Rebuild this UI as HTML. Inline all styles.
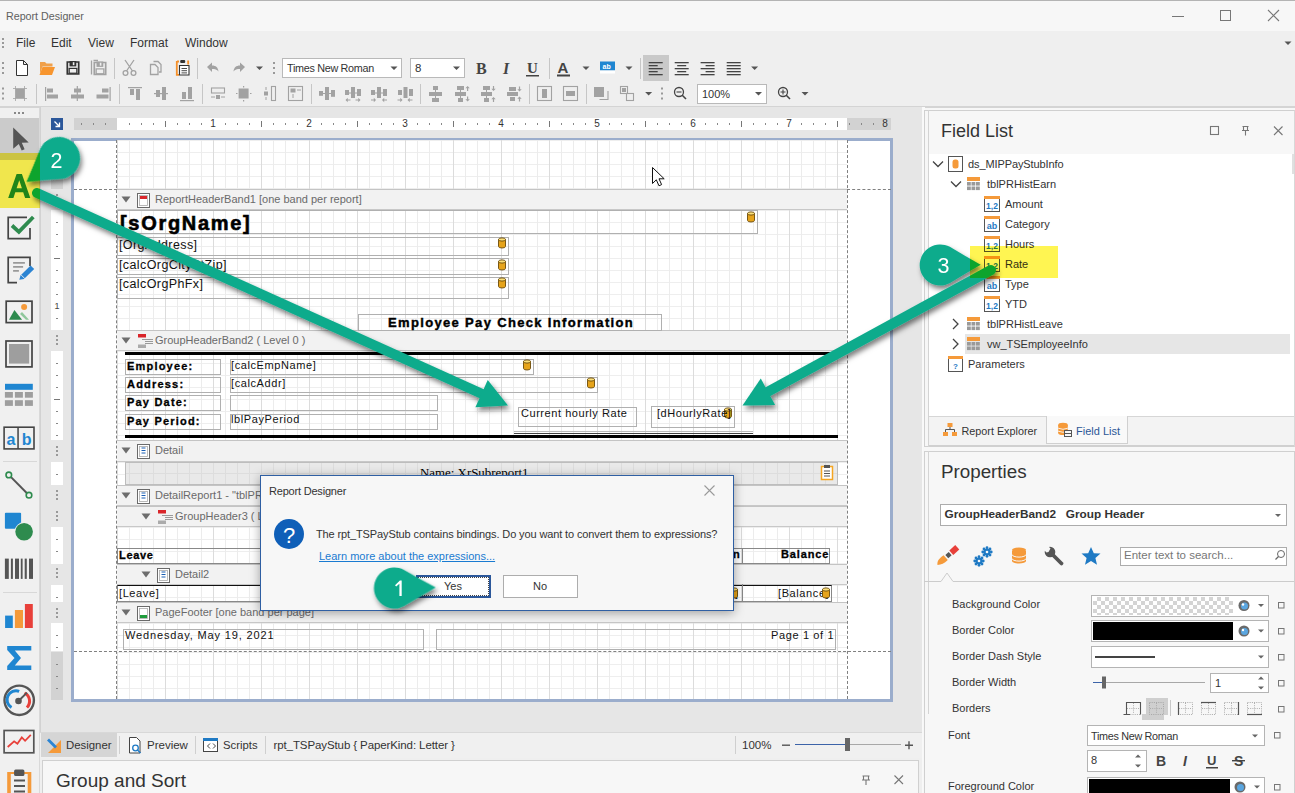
<!DOCTYPE html>
<html><head><meta charset="utf-8">
<style>
*{box-sizing:border-box;margin:0;padding:0}
html,body{width:1295px;height:793px;overflow:hidden;background:#efefef;font-family:"Liberation Sans",sans-serif;color:#222}
.a{position:absolute}
.t{position:absolute;white-space:pre;line-height:1}
svg{position:absolute;overflow:visible}
</style></head><body>
<div class="a" style="left:0;top:0;width:1295px;height:31px;background:#f7f7f7;border-top:1px solid #b4b4b4"></div>
<div class="t" style="left:6px;top:11px;font-size:10.7px;color:#606060">Report Designer</div>
<svg style="left:0;top:0" width="1295" height="31">
 <line x1="1172" y1="16.5" x2="1184" y2="16.5" stroke="#777" stroke-width="1"/>
 <rect x="1220.5" y="10.5" width="10" height="10" fill="none" stroke="#777"/>
 <path d="M1268 10 L1279 21 M1279 10 L1268 21" stroke="#777" stroke-width="1.1"/>
</svg>
<div class="t" style="left:16px;top:37px;font-size:12px;color:#333">File</div>
<div class="t" style="left:51px;top:37px;font-size:12px;color:#333">Edit</div>
<div class="t" style="left:88px;top:37px;font-size:12px;color:#333">View</div>
<div class="t" style="left:130px;top:37px;font-size:12px;color:#333">Format</div>
<div class="t" style="left:185px;top:37px;font-size:12px;color:#333">Window</div>
<svg style="left:0;top:0" width="20" height="60"><rect x="2" y="38" width="2" height="2" fill="#999"/><rect x="2" y="42" width="2" height="2" fill="#999"/><rect x="2" y="46" width="2" height="2" fill="#999"/></svg>
<svg style="left:0;top:0" width="1295" height="107"><rect x="2" y="62" width="2" height="2" fill="#999"/><rect x="2" y="67" width="2" height="2" fill="#999"/><rect x="2" y="72" width="2" height="2" fill="#999"/><path d="M16.5 60.5 h7 l4 4 v11 h-11z M23.5 60.5 v4 h4" fill="#fff" stroke="#333" stroke-width="1"/><path d="M40 62 h5 l1.5 1.5 h6 v3 h-10 l-2.5 7.5 z" fill="#f0a04a"/><path d="M42.5 67 h12.5 l-3 8 h-12.5z" fill="#f7952e"/><path d="M67.3 62 h11.4 v12 h-11.4z" fill="none" stroke="#333" stroke-width="1.7"/><rect x="69.5" y="61" width="6.8" height="5.4" fill="#333"/><rect x="72.8" y="62.2" width="1.6" height="3" fill="#efefef"/><rect x="68.5" y="67.8" width="9" height="6" fill="#333"/><rect x="69.8" y="69" width="6.4" height="3.6" fill="#efefef"/><g transform="translate(0 0.5)"><path d="M94.3 62 h11.4 v12 h-11.4z" fill="none" stroke="#a2a2a2" stroke-width="1.7"/><rect x="96.5" y="61" width="6.8" height="5.4" fill="#a2a2a2"/><rect x="99.8" y="62.2" width="1.6" height="3" fill="#efefef"/><rect x="95.5" y="67.8" width="9" height="6" fill="#a2a2a2"/><rect x="96.8" y="69" width="6.4" height="3.6" fill="#efefef"/></g><path d="M91.5 60.5 v14 M93.5 60.5 h4.5" stroke="#a2a2a2" stroke-width="1.3"/><rect x="114" y="58" width="1" height="21" fill="#c6c6c6"/><path d="M125 60 l7.5 11 M134 60 l-7.5 11" stroke="#a2a2a2" stroke-width="1.3"/><circle cx="125.5" cy="73" r="2.4" fill="none" stroke="#a2a2a2" stroke-width="1.3"/><circle cx="133.5" cy="73" r="2.4" fill="none" stroke="#a2a2a2" stroke-width="1.3"/><path d="M153.5 61.5 h4.5 l3 3 v7.5 h-2" fill="none" stroke="#a2a2a2" stroke-width="1.3"/><path d="M150.5 64.5 h4.5 l3 3 v7 h-7.5z" fill="#efefef" stroke="#a2a2a2" stroke-width="1.3"/><path d="M177 61.5 h2 M176.8 61 v13.8 h2.2 M187.2 61.5 h1 v3" fill="none" stroke="#f5902a" stroke-width="1.8"/><rect x="180.2" y="60" width="5" height="3" rx="1" fill="#333"/><path d="M179.5 65.5 h9.5 v9.5 h-9.5z" fill="#fff" stroke="#333" stroke-width="1.1"/><path d="M181.5 68.5h5.5 M181.5 70.7h5.5 M181.5 72.9h5.5" stroke="#333" stroke-width="0.9"/><rect x="197" y="58" width="1" height="21" fill="#c6c6c6"/><path d="M207 67 l5 -4.5 v3 c4 0 6 2 6.5 6 c-1.5 -2 -3.5 -2.5 -6.5 -2.5 v3z" fill="#a2a2a2"/><path d="M245 67 l-5 -4.5 v3 c-4 0 -6 2 -6.5 6 c1.5 -2 3.5 -2.5 6.5 -2.5 v3z" fill="#a2a2a2"/><path d="M256.0 66.5 h7 l-3.5 3.5z" fill="#555"/><rect x="273" y="62" width="2" height="2" fill="#999"/><rect x="273" y="67" width="2" height="2" fill="#999"/><rect x="273" y="72" width="2" height="2" fill="#999"/><text x="476" y="74" font-family="Liberation Serif" font-weight="bold" font-size="16" fill="#444">B</text><text x="503" y="74" font-family="Liberation Serif" font-style="italic" font-weight="bold" font-size="16" fill="#444">I</text><text x="527" y="73" font-family="Liberation Serif" font-weight="bold" font-size="15" fill="#444">U</text><rect x="526" y="75" width="13" height="1.5" fill="#444"/><rect x="549" y="58" width="1" height="21" fill="#c6c6c6"/><text x="557.5" y="73" font-family="Liberation Sans" font-weight="bold" font-size="15" fill="#444">A</text><rect x="557" y="74.5" width="13" height="2" fill="#444"/><path d="M582.5 66.5 h7 l-3.5 3.5z" fill="#555"/><rect x="600" y="61.5" width="15" height="9" fill="#1f86d1"/><rect x="600" y="70.5" width="15" height="3" fill="#fff"/><text x="602.5" y="68.5" font-family="Liberation Sans" font-weight="bold" font-size="7" fill="#fff">ab</text><path d="M625.5 66.5 h7 l-3.5 3.5z" fill="#555"/><rect x="640" y="58" width="1" height="21" fill="#c6c6c6"/><rect x="643" y="55" width="26" height="26" fill="#c9c9c9"/><rect x="648.7" y="62" width="14" height="1.3" fill="#444"/><rect x="648.7" y="65" width="9" height="1.3" fill="#444"/><rect x="648.7" y="68" width="14" height="1.3" fill="#444"/><rect x="648.7" y="71" width="9" height="1.3" fill="#444"/><rect x="648.7" y="74" width="14" height="1.3" fill="#444"/><rect x="674.7" y="62" width="14" height="1.3" fill="#444"/><rect x="677.2" y="65" width="9" height="1.3" fill="#444"/><rect x="674.7" y="68" width="14" height="1.3" fill="#444"/><rect x="677.2" y="71" width="9" height="1.3" fill="#444"/><rect x="674.7" y="74" width="14" height="1.3" fill="#444"/><rect x="700.6" y="62" width="14" height="1.3" fill="#444"/><rect x="705.6" y="65" width="9" height="1.3" fill="#444"/><rect x="700.6" y="68" width="14" height="1.3" fill="#444"/><rect x="705.6" y="71" width="9" height="1.3" fill="#444"/><rect x="700.6" y="74" width="14" height="1.3" fill="#444"/><rect x="726.7" y="62" width="14" height="1.3" fill="#444"/><rect x="726.7" y="65" width="14" height="1.3" fill="#444"/><rect x="726.7" y="68" width="14" height="1.3" fill="#444"/><rect x="726.7" y="71" width="14" height="1.3" fill="#444"/><rect x="726.7" y="74" width="14" height="1.3" fill="#444"/><path d="M751.1 66.5 h7 l-3.5 3.5z" fill="#555"/><path d="M1284.5 41.5 h7 l-3.5 3.5z" fill="#555"/><rect x="2" y="87.5" width="2" height="2" fill="#999"/><rect x="2" y="92.5" width="2" height="2" fill="#999"/><rect x="2" y="97.5" width="2" height="2" fill="#999"/><rect x="15.5" y="89.0" width="9" height="9" fill="#a2a2a2"/><path d="M13 88.5h14 M13 98.5h14 M15.5 86v15 M24.5 86v15" stroke="#a2a2a2" stroke-width="0.8"/><rect x="36" y="84" width="1" height="20" fill="#c6c6c6"/><rect x="45" y="87" width="1.2" height="14" fill="#a2a2a2"/><rect x="47" y="88.5" width="6" height="4" fill="#a2a2a2"/><rect x="47" y="94.5" width="11" height="4" fill="#a2a2a2"/><rect x="76.7" y="86" width="1.2" height="15" fill="#a2a2a2"/><rect x="74" y="88.5" width="7" height="4" fill="#a2a2a2"/><rect x="71" y="94.5" width="13" height="4" fill="#a2a2a2"/><rect x="109.5" y="87" width="1.2" height="14" fill="#a2a2a2"/><rect x="102" y="88.5" width="6.5" height="4" fill="#a2a2a2"/><rect x="96.5" y="94.5" width="12" height="4" fill="#a2a2a2"/><rect x="119" y="84" width="1" height="20" fill="#c6c6c6"/><rect x="128" y="87" width="14" height="1.2" fill="#a2a2a2"/><rect x="130" y="89" width="4" height="6" fill="#a2a2a2"/><rect x="136" y="89" width="4" height="11" fill="#a2a2a2"/><rect x="154" y="93" width="14" height="1.2" fill="#a2a2a2"/><rect x="156" y="90" width="4" height="7" fill="#a2a2a2"/><rect x="162" y="87" width="4" height="13" fill="#a2a2a2"/><rect x="180" y="100" width="14" height="1.2" fill="#a2a2a2"/><rect x="182" y="92" width="4" height="7" fill="#a2a2a2"/><rect x="188" y="87" width="4" height="12" fill="#a2a2a2"/><rect x="202" y="84" width="1" height="20" fill="#c6c6c6"/><rect x="211.5" y="88" width="13" height="5" fill="none" stroke="#a2a2a2" stroke-width="1.1"/><rect x="216" y="95" width="4" height="4" fill="#a2a2a2"/><path d="M211 97h4 M221 97h4" stroke="#a2a2a2"/><rect x="238.6" y="88.5" width="10" height="10" fill="#a2a2a2"/><path d="M243.6 86v1.5 M243.6 100v1.5 M236 93.5h1.5 M250 93.5h1.5" stroke="#a2a2a2" stroke-width="1.2"/><rect x="264" y="91.5" width="4" height="4" fill="#a2a2a2"/><rect x="271.5" y="86.5" width="4" height="14" fill="none" stroke="#a2a2a2" stroke-width="1.1"/><path d="M266 87v3 M266 97v3" stroke="#a2a2a2"/><rect x="288.5" y="86.5" width="14" height="14" fill="none" stroke="#a2a2a2" stroke-width="1.1"/><rect x="290.5" y="88.5" width="5" height="4" fill="#a2a2a2"/><path d="M297 90h4 M293 94v4" stroke="#a2a2a2"/><rect x="311" y="84" width="1" height="20" fill="#c6c6c6"/><rect x="420" y="84" width="1" height="20" fill="#c6c6c6"/><rect x="529" y="84" width="1" height="20" fill="#c6c6c6"/><rect x="537.5" y="86.5" width="14" height="14" fill="none" stroke="#a2a2a2" stroke-width="1.1"/><rect x="542" y="89" width="5" height="9" fill="#a2a2a2"/><rect x="563.5" y="86.5" width="14" height="14" fill="none" stroke="#a2a2a2" stroke-width="1.1"/><rect x="566" y="91" width="9" height="5" fill="#a2a2a2"/><rect x="586" y="84" width="1" height="20" fill="#c6c6c6"/><rect x="594" y="87" width="10" height="10" fill="#a2a2a2"/><path d="M599.5 99.5h8.5v-8.5" fill="none" stroke="#a2a2a2" stroke-width="1.1"/><rect x="620.5" y="86.5" width="7" height="7" fill="none" stroke="#a2a2a2" stroke-width="1.1"/><rect x="626.5" y="93.5" width="7" height="7" fill="none" stroke="#a2a2a2" stroke-width="1.1"/><rect x="622" y="88" width="4" height="4" fill="#a2a2a2"/><path d="M645.1 92.0 h7 l-3.5 3.5z" fill="#555"/><rect x="661" y="87.5" width="2" height="2" fill="#999"/><rect x="661" y="92.5" width="2" height="2" fill="#999"/><rect x="661" y="97.5" width="2" height="2" fill="#999"/><circle cx="679" cy="92" r="4.5" fill="none" stroke="#444" stroke-width="1.3"/><path d="M682 95l4 4" stroke="#444" stroke-width="1.6"/><path d="M676.5 92h5" stroke="#444" stroke-width="1.1"/><circle cx="783" cy="92" r="4.5" fill="none" stroke="#444" stroke-width="1.3"/><path d="M786 95l4 4" stroke="#444" stroke-width="1.6"/><path d="M780.5 92h5 M783 89.5v5" stroke="#444" stroke-width="1.1"/><path d="M801.5 92.0 h7 l-3.5 3.5z" fill="#555"/><rect x="319" y="91" width="4" height="4.8" fill="#a2a2a2"/><rect x="325" y="87" width="4" height="13" fill="#a2a2a2"/><rect x="331" y="90" width="4" height="6.8" fill="#a2a2a2"/><rect x="319" y="93" width="16" height="1" fill="#a2a2a2"/><rect x="345" y="90" width="4" height="5" fill="#a2a2a2"/><rect x="351" y="87" width="4" height="11" fill="#a2a2a2"/><rect x="357" y="89" width="4" height="7" fill="#a2a2a2"/><rect x="345" y="92.5" width="16" height="1" fill="#a2a2a2"/><path d="M345.5 100 l2.2 -2.2 v1.6 h2.8 v1.2 h-2.8 v1.6z" fill="#a2a2a2"/><path d="M360.5 100 l-2.2 -2.2 v1.6 h-2.8 v1.2 h2.8 v1.6z" fill="#a2a2a2"/><rect x="371" y="90" width="4" height="5" fill="#a2a2a2"/><rect x="377" y="87" width="4" height="11" fill="#a2a2a2"/><rect x="383" y="89" width="4" height="7" fill="#a2a2a2"/><rect x="371" y="92.5" width="16" height="1" fill="#a2a2a2"/><path d="M376 100 l-2.2 -2.2 v1.6 h-2.8 v1.2 h2.8 v1.6z" fill="#a2a2a2"/><path d="M382 100 l2.2 -2.2 v1.6 h2.8 v1.2 h-2.8 v1.6z" fill="#a2a2a2"/><rect x="398" y="90" width="4" height="5" fill="#a2a2a2"/><rect x="403.5" y="87" width="4" height="11" fill="#a2a2a2"/><rect x="409" y="89" width="4" height="7" fill="#a2a2a2"/><path d="M402.5 100 l-2.2 -2.2 v1.6 h-2.8 v1.2 h2.8 v1.6z" fill="#a2a2a2"/><path d="M407.5 100 l2.2 -2.2 v1.6 h2.8 v1.2 h-2.8 v1.6z" fill="#a2a2a2"/><rect x="433" y="86" width="5" height="4" fill="#a2a2a2"/><rect x="429" y="92" width="13" height="4" fill="#a2a2a2"/><rect x="432" y="98" width="7" height="4" fill="#a2a2a2"/><rect x="435" y="86" width="1" height="16" fill="#a2a2a2"/><rect x="457" y="86" width="7" height="4" fill="#a2a2a2"/><rect x="455" y="92" width="11" height="4" fill="#a2a2a2"/><rect x="458" y="98" width="5" height="4" fill="#a2a2a2"/><rect x="460" y="86" width="1" height="16" fill="#a2a2a2"/><path d="M467.6 86 l-2.2 2.2 h1.6 v2.8 h1.2 v-2.8 h1.6z" fill="#a2a2a2"/><path d="M467.6 101.5 l-2.2 -2.2 h1.6 v-2.8 h1.2 v2.8 h1.6z" fill="#a2a2a2"/><rect x="483" y="86" width="7" height="4" fill="#a2a2a2"/><rect x="481" y="92" width="11" height="4" fill="#a2a2a2"/><rect x="484" y="98" width="5" height="4" fill="#a2a2a2"/><rect x="486" y="86" width="1" height="16" fill="#a2a2a2"/><path d="M493.5 91 l-2.2 -2.2 h1.6 v-2.8 h1.2 v2.8 h1.6z" fill="#a2a2a2"/><path d="M493.5 97 l-2.2 2.2 h1.6 v2.8 h1.2 v-2.8 h1.6z" fill="#a2a2a2"/><rect x="509" y="87" width="7" height="4" fill="#a2a2a2"/><rect x="507" y="92" width="11" height="4" fill="#a2a2a2"/><rect x="510" y="97" width="5" height="4" fill="#a2a2a2"/><path d="M519.5 91.5 l-2.2 -2.2 h1.6 v-2.8 h1.2 v2.8 h1.6z" fill="#a2a2a2"/><path d="M519.5 96.5 l-2.2 2.2 h1.6 v2.8 h1.2 v-2.8 h1.6z" fill="#a2a2a2"/></svg>
<div class="a" style="left:282px;top:58px;width:120px;height:20px;background:#fff;border:1px solid #b9b9b9"></div>
<div class="t" style="left:287px;top:63px;font-size:10.8px;letter-spacing:-0.3px;color:#333">Times New Roman</div>
<div class="a" style="left:410px;top:58px;width:55px;height:20px;background:#fff;border:1px solid #b9b9b9"></div>
<div class="t" style="left:415px;top:63px;font-size:11.5px;color:#333">8</div>
<div class="a" style="left:697px;top:84px;width:70px;height:20px;background:#fff;border:1px solid #b9b9b9"></div>
<div class="t" style="left:702px;top:89px;font-size:11px;color:#333">100%</div>
<svg style="left:0;top:0" width="1295" height="107">
<path d="M390.5 66.5h7l-3.5 3.5z M453 66.5h7l-3.5 3.5z M755 92h7l-3.5 3.5z" fill="#555"/>
<rect x="0" y="106" width="1295" height="1" fill="#d4d4d4"/>
</svg>


<div class="a" style="left:0;top:107px;width:40px;height:686px;background:#f0f0f0"></div>
<div class="a" style="left:40px;top:107px;width:883px;height:626px;background:#e6e6e6"></div>
<div class="a" style="left:923px;top:107px;width:372px;height:686px;background:#efefef"></div>
<div class="a" style="left:51px;top:118px;width:12px;height:12px;background:#2b579a"></div>
<svg style="left:51px;top:118px" width="12" height="12"><path d="M3.5 3.5 L8 8 M8.5 4.5 V8.5 H4.5" stroke="#fff" stroke-width="1.3" fill="none"/></svg>
<div class="a" style="left:74px;top:118px;width:43px;height:12px;background:#d2d2d2"></div>
<div class="a" style="left:117px;top:118px;width:730px;height:12px;background:#fff"></div>
<div class="a" style="left:847px;top:118px;width:44px;height:12px;background:#d2d2d2"></div>
<svg style="left:0;top:0" width="1295" height="793"><rect x="81" y="123" width="1" height="2" fill="#888"/><rect x="93" y="123" width="1" height="2" fill="#888"/><rect x="105" y="123" width="1" height="2" fill="#888"/><rect x="129" y="123" width="1" height="2" fill="#888"/><rect x="141" y="123" width="1" height="2" fill="#888"/><rect x="153" y="123" width="1" height="2" fill="#888"/><rect x="165" y="121" width="1" height="6" fill="#777"/><rect x="177" y="123" width="1" height="2" fill="#888"/><rect x="189" y="123" width="1" height="2" fill="#888"/><rect x="201" y="123" width="1" height="2" fill="#888"/><text x="213" y="127" font-size="10" text-anchor="middle" fill="#333" font-family="Liberation Sans">1</text><rect x="225" y="123" width="1" height="2" fill="#888"/><rect x="237" y="123" width="1" height="2" fill="#888"/><rect x="249" y="123" width="1" height="2" fill="#888"/><rect x="261" y="121" width="1" height="6" fill="#777"/><rect x="273" y="123" width="1" height="2" fill="#888"/><rect x="285" y="123" width="1" height="2" fill="#888"/><rect x="297" y="123" width="1" height="2" fill="#888"/><text x="309" y="127" font-size="10" text-anchor="middle" fill="#333" font-family="Liberation Sans">2</text><rect x="321" y="123" width="1" height="2" fill="#888"/><rect x="333" y="123" width="1" height="2" fill="#888"/><rect x="345" y="123" width="1" height="2" fill="#888"/><rect x="357" y="121" width="1" height="6" fill="#777"/><rect x="369" y="123" width="1" height="2" fill="#888"/><rect x="381" y="123" width="1" height="2" fill="#888"/><rect x="393" y="123" width="1" height="2" fill="#888"/><text x="405" y="127" font-size="10" text-anchor="middle" fill="#333" font-family="Liberation Sans">3</text><rect x="417" y="123" width="1" height="2" fill="#888"/><rect x="429" y="123" width="1" height="2" fill="#888"/><rect x="441" y="123" width="1" height="2" fill="#888"/><rect x="453" y="121" width="1" height="6" fill="#777"/><rect x="465" y="123" width="1" height="2" fill="#888"/><rect x="477" y="123" width="1" height="2" fill="#888"/><rect x="489" y="123" width="1" height="2" fill="#888"/><text x="501" y="127" font-size="10" text-anchor="middle" fill="#333" font-family="Liberation Sans">4</text><rect x="513" y="123" width="1" height="2" fill="#888"/><rect x="525" y="123" width="1" height="2" fill="#888"/><rect x="537" y="123" width="1" height="2" fill="#888"/><rect x="549" y="121" width="1" height="6" fill="#777"/><rect x="561" y="123" width="1" height="2" fill="#888"/><rect x="573" y="123" width="1" height="2" fill="#888"/><rect x="585" y="123" width="1" height="2" fill="#888"/><text x="597" y="127" font-size="10" text-anchor="middle" fill="#333" font-family="Liberation Sans">5</text><rect x="609" y="123" width="1" height="2" fill="#888"/><rect x="621" y="123" width="1" height="2" fill="#888"/><rect x="633" y="123" width="1" height="2" fill="#888"/><rect x="645" y="121" width="1" height="6" fill="#777"/><rect x="657" y="123" width="1" height="2" fill="#888"/><rect x="669" y="123" width="1" height="2" fill="#888"/><rect x="681" y="123" width="1" height="2" fill="#888"/><text x="693" y="127" font-size="10" text-anchor="middle" fill="#333" font-family="Liberation Sans">6</text><rect x="705" y="123" width="1" height="2" fill="#888"/><rect x="717" y="123" width="1" height="2" fill="#888"/><rect x="729" y="123" width="1" height="2" fill="#888"/><rect x="741" y="121" width="1" height="6" fill="#777"/><rect x="753" y="123" width="1" height="2" fill="#888"/><rect x="765" y="123" width="1" height="2" fill="#888"/><rect x="777" y="123" width="1" height="2" fill="#888"/><text x="789" y="127" font-size="10" text-anchor="middle" fill="#333" font-family="Liberation Sans">7</text><rect x="801" y="123" width="1" height="2" fill="#888"/><rect x="813" y="123" width="1" height="2" fill="#888"/><rect x="825" y="123" width="1" height="2" fill="#888"/><rect x="837" y="121" width="1" height="6" fill="#777"/><rect x="849" y="123" width="1" height="2" fill="#888"/><rect x="861" y="123" width="1" height="2" fill="#888"/><rect x="873" y="123" width="1" height="2" fill="#888"/><text x="885" y="127" font-size="10" text-anchor="middle" fill="#333" font-family="Liberation Sans">8</text></svg>
<div class="a" style="left:71px;top:138px;width:822px;height:564px;background:#fff;border:3px solid #9badcc"></div>
<div class="a" style="left:117px;top:140px;width:730px;height:49px;background-image:linear-gradient(to right,#dcdcdc 1px,transparent 1px),linear-gradient(to right,#ececec 1px,transparent 1px),linear-gradient(to bottom,#eeeeee 1px,transparent 1px);background-size:48px 100%,12px 100%,100% 12px;"></div>
<div class="a" style="left:117px;top:210px;width:730px;height:120px;background-image:linear-gradient(to right,#dcdcdc 1px,transparent 1px),linear-gradient(to right,#ececec 1px,transparent 1px),linear-gradient(to bottom,#eeeeee 1px,transparent 1px);background-size:48px 100%,12px 100%,100% 12px;"></div>
<div class="a" style="left:117px;top:189px;width:730px;height:21px;background:#f2f2f2;border-top:1px solid #c4c4c4;border-bottom:1px solid #c8c8c8"></div>
<svg style="left:121px;top:195px" width="10" height="8"><path d="M0.5 1.5h9l-4.5 6z" fill="#6d6d6d"/></svg>
<svg style="left:137px;top:192px" width="13" height="16"><rect x="0.5" y="1.5" width="12" height="14" fill="#fff" stroke="#6a6a6a"/><rect x="2.5" y="3.5" width="8" height="10" fill="none" stroke="#aaa" stroke-width="0.8"/><rect x="3" y="4" width="7" height="3" fill="#d9252a"/></svg>
<div class="t" style="left:155px;top:194px;font-size:11px;color:#6a6a6a">ReportHeaderBand1 [one band per report]</div>
<div class="a" style="left:117px;top:351px;width:730px;height:90px;background-image:linear-gradient(to right,#dcdcdc 1px,transparent 1px),linear-gradient(to right,#ececec 1px,transparent 1px),linear-gradient(to bottom,#eeeeee 1px,transparent 1px);background-size:48px 100%,12px 100%,100% 12px;"></div>
<div class="a" style="left:117px;top:330px;width:730px;height:21px;background:#f2f2f2;border-top:1px solid #c4c4c4;border-bottom:1px solid #c8c8c8"></div>
<svg style="left:121px;top:336px" width="10" height="8"><path d="M0.5 1.5h9l-4.5 6z" fill="#6d6d6d"/></svg>
<svg style="left:137px;top:333px" width="16" height="16"><rect x="1" y="1" width="8" height="3.5" fill="#d9252a"/><path d="M5 6.5h11 M8 8.5h8 M8 10.5h8" stroke="#9a9a9a" stroke-width="1"/><rect x="1" y="11.5" width="8" height="3.5" fill="#ababab"/></svg>
<div class="t" style="left:155px;top:335px;font-size:11px;color:#6a6a6a">GroupHeaderBand2 ( Level 0 )</div>
<div class="a" style="left:117px;top:462px;width:730px;height:23px;background-image:linear-gradient(to right,#dcdcdc 1px,transparent 1px),linear-gradient(to right,#ececec 1px,transparent 1px),linear-gradient(to bottom,#eeeeee 1px,transparent 1px);background-size:48px 100%,12px 100%,100% 12px;"></div>
<div class="a" style="left:117px;top:440px;width:730px;height:22px;background:#f2f2f2;border-top:1px solid #c4c4c4;border-bottom:1px solid #c8c8c8"></div>
<svg style="left:121px;top:446px" width="10" height="8"><path d="M0.5 1.5h9l-4.5 6z" fill="#6d6d6d"/></svg>
<svg style="left:137px;top:443px" width="13" height="16"><rect x="0.5" y="1.5" width="12" height="14" fill="#fff" stroke="#6a6a6a"/><rect x="2.5" y="3.5" width="8" height="10" fill="none" stroke="#aaa" stroke-width="0.8"/><path d="M4.5 5h4 M4.5 7.5h4 M4.5 10h4" stroke="#1a5fb4" stroke-width="1"/></svg>
<div class="t" style="left:155px;top:445px;font-size:11px;color:#6a6a6a">Detail</div>
<div class="a" style="left:117px;top:485px;width:730px;height:21px;background:#f2f2f2;border-top:1px solid #c4c4c4;border-bottom:1px solid #c8c8c8"></div>
<svg style="left:121px;top:491px" width="10" height="8"><path d="M0.5 1.5h9l-4.5 6z" fill="#6d6d6d"/></svg>
<svg style="left:137px;top:488px" width="13" height="16"><rect x="0.5" y="1.5" width="12" height="14" fill="#fff" stroke="#6a6a6a"/><rect x="2.5" y="3.5" width="8" height="10" fill="none" stroke="#aaa" stroke-width="0.8"/><path d="M4.5 5h4 M4.5 7.5h4 M4.5 10h4" stroke="#1a5fb4" stroke-width="1"/></svg>
<div class="t" style="left:155px;top:490px;font-size:11px;color:#6a6a6a">DetailReport1 - "tblPRHistLeave"</div>
<div class="a" style="left:117px;top:527px;width:730px;height:37px;background-image:linear-gradient(to right,#dcdcdc 1px,transparent 1px),linear-gradient(to right,#ececec 1px,transparent 1px),linear-gradient(to bottom,#eeeeee 1px,transparent 1px);background-size:48px 100%,12px 100%,100% 12px;"></div>
<div class="a" style="left:117px;top:506px;width:730px;height:21px;background:#f2f2f2;border-top:1px solid #c4c4c4;border-bottom:1px solid #c8c8c8"></div>
<svg style="left:141px;top:512px" width="10" height="8"><path d="M0.5 1.5h9l-4.5 6z" fill="#6d6d6d"/></svg>
<svg style="left:157px;top:509px" width="16" height="16"><rect x="1" y="1" width="8" height="3.5" fill="#d9252a"/><path d="M5 6.5h11 M8 8.5h8 M8 10.5h8" stroke="#9a9a9a" stroke-width="1"/><rect x="1" y="11.5" width="8" height="3.5" fill="#ababab"/></svg>
<div class="t" style="left:175px;top:511px;font-size:11px;color:#6a6a6a">GroupHeader3 ( Level 0 )</div>
<div class="a" style="left:117px;top:585px;width:730px;height:17px;background-image:linear-gradient(to right,#dcdcdc 1px,transparent 1px),linear-gradient(to right,#ececec 1px,transparent 1px),linear-gradient(to bottom,#eeeeee 1px,transparent 1px);background-size:48px 100%,12px 100%,100% 12px;"></div>
<div class="a" style="left:117px;top:564px;width:730px;height:21px;background:#f2f2f2;border-top:1px solid #c4c4c4;border-bottom:1px solid #c8c8c8"></div>
<svg style="left:141px;top:570px" width="10" height="8"><path d="M0.5 1.5h9l-4.5 6z" fill="#6d6d6d"/></svg>
<svg style="left:157px;top:567px" width="13" height="16"><rect x="0.5" y="1.5" width="12" height="14" fill="#fff" stroke="#6a6a6a"/><rect x="2.5" y="3.5" width="8" height="10" fill="none" stroke="#aaa" stroke-width="0.8"/><path d="M4.5 5h4 M4.5 7.5h4 M4.5 10h4" stroke="#1a5fb4" stroke-width="1"/></svg>
<div class="t" style="left:175px;top:569px;font-size:11px;color:#6a6a6a">Detail2</div>
<div class="a" style="left:117px;top:623px;width:730px;height:28px;background-image:linear-gradient(to right,#dcdcdc 1px,transparent 1px),linear-gradient(to right,#ececec 1px,transparent 1px),linear-gradient(to bottom,#eeeeee 1px,transparent 1px);background-size:48px 100%,12px 100%,100% 12px;"></div>
<div class="a" style="left:117px;top:602px;width:730px;height:21px;background:#f2f2f2;border-top:1px solid #c4c4c4;border-bottom:1px solid #c8c8c8"></div>
<svg style="left:121px;top:608px" width="10" height="8"><path d="M0.5 1.5h9l-4.5 6z" fill="#6d6d6d"/></svg>
<svg style="left:137px;top:605px" width="13" height="16"><rect x="0.5" y="1.5" width="12" height="14" fill="#fff" stroke="#6a6a6a"/><rect x="2.5" y="3.5" width="8" height="10" fill="none" stroke="#aaa" stroke-width="0.8"/><rect x="3" y="10" width="7" height="3" fill="#1f9c3c"/></svg>
<div class="t" style="left:155px;top:607px;font-size:11px;color:#6a6a6a">PageFooter [one band per page]</div>
<div class="a" style="left:117px;top:652px;width:730px;height:47px;background-image:linear-gradient(to right,#dcdcdc 1px,transparent 1px),linear-gradient(to right,#ececec 1px,transparent 1px),linear-gradient(to bottom,#eeeeee 1px,transparent 1px);background-size:48px 100%,12px 100%,100% 12px;"></div>
<div class="a" style="left:116px;top:140px;width:0;height:559px;border-left:1px dashed #808080"></div>
<div class="a" style="left:847px;top:140px;width:0;height:559px;border-left:1px dashed #808080"></div>
<div class="a" style="left:74px;top:189px;width:43px;height:0;border-top:1px dashed #808080"></div>
<div class="a" style="left:847px;top:189px;width:44px;height:0;border-top:1px dashed #808080"></div>
<div class="a" style="left:74px;top:651px;width:817px;height:0;border-top:1px dashed #808080"></div>
<div class="a" style="left:117px;top:210px;width:641px;height:24px;border:1px solid #b0b0b0;background:transparent;"></div>
<div class="t" style="left:120px;top:213px;font-size:20px;font-weight:bold;letter-spacing:1.7px;color:#000;-webkit-text-stroke:0.6px #000">[sOrgName]</div>
<svg style="left:746px;top:211px" width="10" height="12"><path d="M1.5 2.5 v6.8 a3.5 1.7 0 0 0 7 0 v-6.8 z" fill="#e6a41c" stroke="#6b4a08" stroke-width="0.9"/><ellipse cx="5" cy="2.5" rx="3.5" ry="1.6" fill="#fbe07a" stroke="#6b4a08" stroke-width="0.9"/></svg>
<div class="a" style="left:117px;top:237px;width:392px;height:19px;border:1px solid #b0b0b0;background:transparent;"></div>
<div class="t" style="left:119px;top:239px;font-size:12.5px;letter-spacing:0.4px;color:#111">[OrgAddress]</div>
<svg style="left:497px;top:237px" width="10" height="12"><path d="M1.5 2.5 v6.8 a3.5 1.7 0 0 0 7 0 v-6.8 z" fill="#e6a41c" stroke="#6b4a08" stroke-width="0.9"/><ellipse cx="5" cy="2.5" rx="3.5" ry="1.6" fill="#fbe07a" stroke="#6b4a08" stroke-width="0.9"/></svg>
<div class="a" style="left:117px;top:258px;width:392px;height:17px;border:1px solid #b0b0b0;background:transparent;"></div>
<div class="t" style="left:119px;top:259px;font-size:12.5px;letter-spacing:0.4px;color:#111">[calcOrgCityStZip]</div>
<svg style="left:497px;top:259px" width="10" height="12"><path d="M1.5 2.5 v6.8 a3.5 1.7 0 0 0 7 0 v-6.8 z" fill="#e6a41c" stroke="#6b4a08" stroke-width="0.9"/><ellipse cx="5" cy="2.5" rx="3.5" ry="1.6" fill="#fbe07a" stroke="#6b4a08" stroke-width="0.9"/></svg>
<div class="a" style="left:117px;top:277px;width:392px;height:22px;border:1px solid #b0b0b0;background:transparent;"></div>
<div class="t" style="left:119px;top:278px;font-size:12.5px;letter-spacing:0.4px;color:#111">[calcOrgPhFx]</div>
<svg style="left:497px;top:277px" width="10" height="12"><path d="M1.5 2.5 v6.8 a3.5 1.7 0 0 0 7 0 v-6.8 z" fill="#e6a41c" stroke="#6b4a08" stroke-width="0.9"/><ellipse cx="5" cy="2.5" rx="3.5" ry="1.6" fill="#fbe07a" stroke="#6b4a08" stroke-width="0.9"/></svg>
<div class="a" style="left:358px;top:314px;width:304px;height:17px;border:1px solid #b0b0b0;background:transparent;"></div>
<div class="t" style="left:388px;top:316px;font-size:13px;font-weight:bold;letter-spacing:1.34px;color:#000;-webkit-text-stroke:0.4px #000">Employee Pay Check Information</div>
<div class="a" style="left:125px;top:352px;width:713px;height:3px;background:#000"></div>
<div class="a" style="left:125px;top:435px;width:713px;height:3px;background:#000"></div>
<div class="a" style="left:125px;top:359px;width:96px;height:16px;border:1px solid #b0b0b0;background:transparent;"></div>
<div class="t" style="left:127px;top:361px;font-size:11px;font-weight:bold;letter-spacing:1.2px;color:#000;-webkit-text-stroke:0.3px #000">Employee:</div>
<div class="a" style="left:125px;top:377px;width:96px;height:16px;border:1px solid #b0b0b0;background:transparent;"></div>
<div class="t" style="left:127px;top:379px;font-size:11px;font-weight:bold;letter-spacing:1.2px;color:#000;-webkit-text-stroke:0.3px #000">Address:</div>
<div class="a" style="left:125px;top:395px;width:96px;height:16px;border:1px solid #b0b0b0;background:transparent;"></div>
<div class="t" style="left:127px;top:397px;font-size:11px;font-weight:bold;letter-spacing:1.2px;color:#000;-webkit-text-stroke:0.3px #000">Pay Date:</div>
<div class="a" style="left:125px;top:414px;width:96px;height:16px;border:1px solid #b0b0b0;background:transparent;"></div>
<div class="t" style="left:127px;top:416px;font-size:11px;font-weight:bold;letter-spacing:1.2px;color:#000;-webkit-text-stroke:0.3px #000">Pay Period:</div>
<div class="a" style="left:230px;top:359px;width:304px;height:16px;border:1px solid #b0b0b0;background:transparent;"></div>
<div class="t" style="left:231px;top:360px;font-size:11px;letter-spacing:0.6px;color:#111">[calcEmpName]</div>
<svg style="left:522px;top:359px" width="10" height="12"><path d="M1.5 2.5 v6.8 a3.5 1.7 0 0 0 7 0 v-6.8 z" fill="#e6a41c" stroke="#6b4a08" stroke-width="0.9"/><ellipse cx="5" cy="2.5" rx="3.5" ry="1.6" fill="#fbe07a" stroke="#6b4a08" stroke-width="0.9"/></svg>
<div class="a" style="left:230px;top:377px;width:368px;height:16px;border:1px solid #b0b0b0;background:transparent;"></div>
<div class="t" style="left:231px;top:378px;font-size:11px;letter-spacing:0.6px;color:#111">[calcAddr]</div>
<svg style="left:586px;top:377px" width="10" height="12"><path d="M1.5 2.5 v6.8 a3.5 1.7 0 0 0 7 0 v-6.8 z" fill="#e6a41c" stroke="#6b4a08" stroke-width="0.9"/><ellipse cx="5" cy="2.5" rx="3.5" ry="1.6" fill="#fbe07a" stroke="#6b4a08" stroke-width="0.9"/></svg>
<div class="a" style="left:230px;top:395px;width:208px;height:16px;border:1px solid #b0b0b0;background:transparent;"></div>
<div class="a" style="left:230px;top:414px;width:208px;height:16px;border:1px solid #b0b0b0;background:transparent;"></div>
<div class="t" style="left:231px;top:414px;font-size:11px;letter-spacing:0.6px;color:#111">lblPayPeriod</div>
<div class="a" style="left:518px;top:407px;width:119px;height:20px;border:1px solid #b0b0b0;background:transparent;"></div>
<div class="t" style="left:521px;top:408px;font-size:11px;letter-spacing:0.55px;color:#111">Current hourly Rate</div>
<div class="a" style="left:651px;top:406px;width:84px;height:22px;border:1px solid #b0b0b0;background:transparent;"></div>
<svg style="left:723px;top:407px" width="10" height="12"><path d="M1.5 2.5 v6.8 a3.5 1.7 0 0 0 7 0 v-6.8 z" fill="#e6a41c" stroke="#6b4a08" stroke-width="0.9"/><ellipse cx="5" cy="2.5" rx="3.5" ry="1.6" fill="#fbe07a" stroke="#6b4a08" stroke-width="0.9"/></svg>
<div class="t" style="left:657px;top:408px;font-size:11px;letter-spacing:0.55px;color:#111">[dHourlyRate]</div>
<div class="a" style="left:514px;top:431px;width:239px;height:1px;background:#bbb"></div><div class="a" style="left:514px;top:433px;width:239px;height:1px;background:#444"></div>
<div class="a" style="left:125px;top:462px;width:713px;height:23px;background-color:#e9e9e9;border:1px solid #bdbdbd;background-image:linear-gradient(to right,#dddddd 1px,transparent 1px),linear-gradient(to bottom,#dddddd 1px,transparent 1px);background-size:12px 100%,100% 12px;background-position:3px 0,0 10px"></div>
<div class="t" style="left:420px;top:466.5px;font-family:'Liberation Serif',serif;font-size:12.9px;color:#000">Name: XrSubreport1</div>
<svg style="left:820px;top:464px" width="14" height="16"><rect x="1.5" y="2.5" width="11" height="13" fill="#fff" stroke="#f5a623" stroke-width="1.5"/><rect x="4" y="1" width="6" height="3" fill="#555"/><path d="M4 7h6 M4 9.5h6 M4 12h6" stroke="#555" stroke-width="1"/></svg>
<div class="a" style="left:117px;top:548px;width:713px;height:16px;border:1px solid #888;background:transparent;"></div>
<div class="t" style="left:119px;top:550px;font-size:11px;font-weight:bold;letter-spacing:0.7px;color:#000;-webkit-text-stroke:0.3px #000">Leave</div>
<div class="t" style="left:781px;top:549px;font-size:11px;font-weight:bold;letter-spacing:0.85px;color:#000;-webkit-text-stroke:0.3px #000">Balance</div>
<div class="t" style="left:733px;top:549px;font-size:11px;font-weight:bold;letter-spacing:0px;color:#000;-webkit-text-stroke:0.3px #000">n</div>
<div class="t" style="left:735px;top:588px;font-size:11px;letter-spacing:0.6px;color:#111">]</div>
<div class="a" style="left:742px;top:548px;width:1px;height:16px;background:#888"></div>
<div class="a" style="left:117px;top:585px;width:715px;height:17px;border:1px solid #888;background:transparent;border-top:1px solid #111"></div>
<div class="t" style="left:119px;top:588px;font-size:11px;letter-spacing:0.6px;color:#111">[Leave]</div>
<div class="t" style="left:778px;top:588px;font-size:11px;letter-spacing:0.6px;color:#111">[Balance]</div>
<div class="a" style="left:742px;top:584px;width:1px;height:18px;background:#888"></div>
<svg style="left:821px;top:587px" width="10" height="12"><path d="M1.5 2.5 v6.8 a3.5 1.7 0 0 0 7 0 v-6.8 z" fill="#e6a41c" stroke="#6b4a08" stroke-width="0.9"/><ellipse cx="5" cy="2.5" rx="3.5" ry="1.6" fill="#fbe07a" stroke="#6b4a08" stroke-width="0.9"/></svg>
<svg style="left:729px;top:587px" width="10" height="12"><path d="M1.5 2.5 v6.8 a3.5 1.7 0 0 0 7 0 v-6.8 z" fill="#e6a41c" stroke="#6b4a08" stroke-width="0.9"/><ellipse cx="5" cy="2.5" rx="3.5" ry="1.6" fill="#fbe07a" stroke="#6b4a08" stroke-width="0.9"/></svg>
<div class="a" style="left:123px;top:629px;width:301px;height:21px;border:1px solid #b0b0b0;background:transparent;"></div>
<div class="t" style="left:125px;top:630px;font-size:11px;letter-spacing:0.85px;color:#111">Wednesday, May 19, 2021</div>
<div class="a" style="left:436px;top:629px;width:400px;height:21px;border:1px solid #b0b0b0;background:transparent;"></div>
<div class="t" style="left:771px;top:630px;font-size:11px;letter-spacing:0.63px;color:#111">Page 1 of 1</div>
<svg style="left:0;top:0" width="1295" height="793"><rect x="51" y="140" width="12" height="49" fill="#d2d2d2"/><rect x="56" y="152" width="2" height="1" fill="#888"/><rect x="56" y="164" width="2" height="1" fill="#888"/><rect x="56" y="176" width="2" height="1" fill="#888"/><rect x="51" y="210" width="12" height="120" fill="#fff"/><rect x="56" y="222" width="2" height="1" fill="#888"/><rect x="56" y="234" width="2" height="1" fill="#888"/><rect x="56" y="246" width="2" height="1" fill="#888"/><rect x="54" y="258" width="6" height="1" fill="#777"/><rect x="56" y="270" width="2" height="1" fill="#888"/><rect x="56" y="282" width="2" height="1" fill="#888"/><rect x="56" y="294" width="2" height="1" fill="#888"/><text x="57" y="309" font-size="9" text-anchor="middle" fill="#444" font-family="Liberation Sans">1</text><rect x="56" y="318" width="2" height="1" fill="#888"/><rect x="51" y="351" width="12" height="89" fill="#fff"/><rect x="56" y="363" width="2" height="1" fill="#888"/><rect x="56" y="375" width="2" height="1" fill="#888"/><rect x="56" y="387" width="2" height="1" fill="#888"/><rect x="54" y="399" width="6" height="1" fill="#777"/><rect x="56" y="411" width="2" height="1" fill="#888"/><rect x="56" y="423" width="2" height="1" fill="#888"/><rect x="56" y="435" width="2" height="1" fill="#888"/><rect x="51" y="462" width="12" height="23" fill="#fff"/><rect x="56" y="474" width="2" height="1" fill="#888"/><rect x="51" y="527" width="12" height="37" fill="#fff"/><rect x="56" y="539" width="2" height="1" fill="#888"/><rect x="56" y="551" width="2" height="1" fill="#888"/><rect x="51" y="585" width="12" height="17" fill="#fff"/><rect x="56" y="597" width="2" height="1" fill="#888"/><rect x="51" y="623" width="12" height="28" fill="#fff"/><rect x="56" y="635" width="2" height="1" fill="#888"/><rect x="56" y="647" width="2" height="1" fill="#888"/><rect x="51" y="652" width="12" height="48" fill="#d2d2d2"/><rect x="56" y="664" width="2" height="1" fill="#888"/><rect x="56" y="676" width="2" height="1" fill="#888"/><rect x="56" y="688" width="2" height="1" fill="#888"/><rect x="56" y="194" width="2" height="2" fill="#999"/><rect x="56" y="198" width="2" height="2" fill="#999"/><rect x="56" y="202" width="2" height="2" fill="#999"/><rect x="56" y="335" width="2" height="2" fill="#999"/><rect x="56" y="339" width="2" height="2" fill="#999"/><rect x="56" y="343" width="2" height="2" fill="#999"/><rect x="56" y="446" width="2" height="2" fill="#999"/><rect x="56" y="450" width="2" height="2" fill="#999"/><rect x="56" y="454" width="2" height="2" fill="#999"/><rect x="56" y="490" width="2" height="2" fill="#999"/><rect x="56" y="494" width="2" height="2" fill="#999"/><rect x="56" y="498" width="2" height="2" fill="#999"/><rect x="56" y="511" width="2" height="2" fill="#999"/><rect x="56" y="515" width="2" height="2" fill="#999"/><rect x="56" y="519" width="2" height="2" fill="#999"/><rect x="56" y="568" width="2" height="2" fill="#999"/><rect x="56" y="572" width="2" height="2" fill="#999"/><rect x="56" y="576" width="2" height="2" fill="#999"/><rect x="56" y="608" width="2" height="2" fill="#999"/><rect x="56" y="612" width="2" height="2" fill="#999"/><rect x="56" y="616" width="2" height="2" fill="#999"/></svg>
<svg style="left:652px;top:167px" width="14" height="20"><path d="M0.5 0.5 L0.5 16.5 L4.3 12.8 L7 18.8 L9.6 17.6 L7 11.8 L12.2 11.8 Z" fill="#fff" stroke="#111" stroke-width="1" stroke-linejoin="round"/></svg>
<div class="a" style="left:40px;top:107px;width:1px;height:626px;background:#d2d2d2"></div>
<div class="a" style="left:39px;top:107px;width:1px;height:686px;background:#d9d9d9"></div>
<div class="a" style="left:0;top:107px;width:40px;height:1px;background:#d4d4d4"></div>
<div class="a" style="left:0;top:118px;width:39px;height:42px;background:#cbcbcb"></div>
<svg style="left:0;top:0" width="40" height="793"><rect x="14" y="112" width="2" height="2" fill="#888"/><rect x="18" y="112" width="2" height="2" fill="#888"/><rect x="22" y="112" width="2" height="2" fill="#888"/><path d="M13.2 127.4 L28.7 142.6 L21.8 142.8 L24.6 149.3 L21.7 150.6 L18.8 143.9 L13.2 148.8 Z" fill="#555"/><path fill-rule="evenodd" d="M8.2 198 L16.6 174 L21.9 174 L30.3 198 L25.1 198 L23.2 192.3 L15.3 192.3 L13.4 198 Z M16.6 188.3 L21.9 188.3 L19.25 180.2 Z" fill="#218a4b"/><path d="M27 217.3 H8.2 V238.6 H30 V228" fill="none" stroke="#444" stroke-width="1.7"/><path d="M12 225.5 L18.9 231.8 L33.3 217" fill="none" stroke="#2e8b4e" stroke-width="3.8"/><path d="M30 266 V257.4 H8.2 V282.6 H17" fill="none" stroke="#444" stroke-width="1.7"/><path d="M13.1 262.9h11.8 M13.1 266.9h10 M13.1 270.9h5.8" stroke="#999" stroke-width="1.6"/><path d="M19.3 279.8 L20.5 275.5 L30.6 265.4 L34.2 269 L24 279.1 Z" fill="#2b84d3"/><path d="M21 274.8 L25 278.8" stroke="#f0f0f0" stroke-width="0.9"/><rect x="6.2" y="301.2" width="25.8" height="21.4" fill="none" stroke="#444" stroke-width="1.7"/><path d="M9 319.8 L14.4 309.9 L22.1 319.8Z" fill="#2e8b4e"/><path d="M20 314 L22 312 L29 319.8 L26 319.8Z" fill="#8fc79c"/><circle cx="24.1" cy="307" r="3" fill="#f59a3a"/><rect x="6" y="341" width="26" height="25.9" fill="#f0f0f0" stroke="#444" stroke-width="1.7"/><rect x="9" y="344" width="20.2" height="19.6" fill="#9e9e9e"/><rect x="5" y="383.8" width="27.8" height="6" fill="#1f86d1"/><rect x="4.9" y="392.0" width="8" height="5.7" fill="#9e9e9e"/><rect x="14.9" y="392.0" width="8" height="5.7" fill="#9e9e9e"/><rect x="24.9" y="392.0" width="8" height="5.7" fill="#9e9e9e"/><rect x="4.9" y="400.2" width="8" height="5.7" fill="#9e9e9e"/><rect x="14.9" y="400.2" width="8" height="5.7" fill="#9e9e9e"/><rect x="24.9" y="400.2" width="8" height="5.7" fill="#9e9e9e"/><rect x="4.1" y="427.2" width="29.9" height="21.7" fill="none" stroke="#444" stroke-width="1.6"/><rect x="17.3" y="427" width="1.5" height="22" fill="#444"/><text x="11" y="444.5" text-anchor="middle" font-family="Liberation Sans" font-weight="bold" font-size="16" fill="#1f86d1">a</text><text x="26.6" y="444.5" text-anchor="middle" font-family="Liberation Sans" font-weight="bold" font-size="16" fill="#1f86d1">b</text><rect x="3" y="461" width="34" height="1" fill="#d8d8d8"/><path d="M8.8 474.9 L29 495.2" stroke="#555" stroke-width="2"/><circle cx="8.8" cy="474.9" r="2.8" fill="#f0f0f0" stroke="#2e8b4e" stroke-width="1.6"/><circle cx="29" cy="495.2" r="2.8" fill="#f0f0f0" stroke="#2e8b4e" stroke-width="1.6"/><rect x="4.9" y="512.8" width="16.2" height="15.9" rx="1" fill="#1f86d1"/><circle cx="24.1" cy="531.7" r="9.6" fill="#f0f0f0"/><circle cx="24.1" cy="531.7" r="8.8" fill="#2e8b4e"/><rect x="4.9" y="558.6" width="3.9" height="20.3" fill="#555"/><rect x="10.9" y="558.6" width="2.0" height="20.3" fill="#555"/><rect x="15" y="558.6" width="4.0" height="20.3" fill="#555"/><rect x="20.8" y="558.6" width="1.8" height="20.3" fill="#555"/><rect x="24.7" y="558.6" width="2.1" height="20.3" fill="#555"/><rect x="29" y="558.6" width="4.0" height="20.3" fill="#555"/><rect x="3" y="592" width="34" height="1" fill="#d8d8d8"/><rect x="5.1" y="615.6" width="7.7" height="12.4" fill="#1f86d1"/><rect x="14.9" y="610" width="8.1" height="18" fill="#f59a3a"/><rect x="24.9" y="604" width="7.9" height="24" fill="#e8403a"/><path d="M7.2 646 H31.3 V650.5 H14.8 L21 658 L14.8 665.5 H31.3 V670 H7.2 V666 L14.5 658 L7.2 650 Z" fill="#1f86d1"/><circle cx="19.2" cy="700.3" r="14.7" fill="none" stroke="#555" stroke-width="2.4"/><path d="M11.5 707.5 A9 9 0 0 1 19.2 691.3" fill="none" stroke="#1f86d1" stroke-width="3"/><path d="M24.5 693 A9 9 0 0 1 26.9 707.5" fill="none" stroke="#e8403a" stroke-width="3"/><circle cx="18.5" cy="701" r="3.3" fill="#555"/><path d="M18.5 701 L27 692.6" stroke="#555" stroke-width="2"/><rect x="4.1" y="730.5" width="29.7" height="22.3" fill="none" stroke="#555" stroke-width="1.7"/><path d="M7.7 747 L14.1 741.3 L17.4 743.8 L21.8 737.4 L25.1 740.8 L30.8 734.9" fill="none" stroke="#e8403a" stroke-width="1.8"/><rect x="7.2" y="772" width="3.6" height="25" fill="#f59a3a"/><rect x="27.7" y="772" width="3.6" height="25" fill="#f59a3a"/><rect x="9" y="772" width="21" height="2" fill="#f59a3a"/><rect x="14.1" y="769.5" width="10.3" height="6.5" rx="1.5" fill="#555"/><path d="M14 780.5h11 M14 786h11 M14 791.5h11" stroke="#555" stroke-width="2"/></svg>
<div class="a" style="left:40px;top:732px;width:883px;height:26px;background:#f0f0f0;border-top:1px solid #d8d8d8"></div>
<div class="a" style="left:41px;top:733px;width:76px;height:24px;background:#d5d5d5"></div>
<div class="t" style="left:66px;top:740px;font-size:11.4px;color:#333">Designer</div>
<div class="t" style="left:147px;top:740px;font-size:11.5px;color:#333">Preview</div>
<div class="t" style="left:223px;top:740px;font-size:11.3px;color:#333">Scripts</div>
<div class="t" style="left:273.5px;top:740px;font-size:11.5px;letter-spacing:-0.1px;color:#333">rpt_TSPayStub { PaperKind: Letter }</div>
<div class="t" style="left:742px;top:740px;font-size:11.5px;color:#333">100%</div>
<div class="a" style="left:40px;top:758px;width:883px;height:35px;background:#efefef"></div>
<div class="a" style="left:42px;top:760px;width:877px;height:33px;background:#f7f7f7;border:1px solid #d0d0d0;border-bottom:none"></div>
<div class="a" style="left:922px;top:107px;width:3px;height:686px;background:#f9f9f9;border-right:1px solid #d4d4d4"></div>
<div class="t" style="left:56px;top:771px;font-size:19px;color:#333">Group and Sort</div>
<svg style="left:0;top:0" width="1295" height="793"><rect x="119" y="736" width="1" height="18" fill="#cfcfcf"/><rect x="195" y="736" width="1" height="18" fill="#cfcfcf"/><rect x="265" y="736" width="1" height="18" fill="#cfcfcf"/><rect x="735" y="736" width="1" height="18" fill="#cfcfcf"/><path d="M48 753 L61 753 L61 740 Z" fill="#f59a3a"/><path d="M49 738.5 L57 746.5 L55 748.5 L47 740.5Z" fill="#2b84d3"/><path d="M129.5 737.5 h7 l3.5 3.5 v12 h-10.5z" fill="#fff" stroke="#444" stroke-width="1"/><circle cx="135.5" cy="748" r="2.8" fill="none" stroke="#1f7ac4" stroke-width="1.3"/><path d="M137.5 750 l3 3" stroke="#1f7ac4" stroke-width="1.4"/><rect x="203.5" y="738.5" width="14" height="13" fill="#fff" stroke="#444" stroke-width="1"/><rect x="203" y="738" width="15" height="3" fill="#1f7ac4"/><path d="M210 743.5 l-2.5 2.5 l2.5 2.5 M213 743.5 l2.5 2.5 l-2.5 2.5" fill="none" stroke="#444" stroke-width="1"/><rect x="782" y="744.5" width="8" height="1.4" fill="#555"/><rect x="795" y="744" width="52" height="1" fill="#3c63a8"/><rect x="847" y="744" width="54" height="1" fill="#a8a8a8"/><rect x="845" y="738" width="5" height="13" fill="#666"/><path d="M905 745.2 h8 M909 741.2 v8" stroke="#555" stroke-width="1.4"/><path d="M862.5 776 h7 M863.5 776 v4 M868.5 776 v4 M862 780 h8 M866 780 v5" stroke="#777" stroke-width="1.1" fill="none"/><path d="M894.5 775.5 l8.5 8.5 M903 775.5 l-8.5 8.5" stroke="#777" stroke-width="1.1"/></svg>
<div class="a" style="left:923px;top:107px;width:372px;height:341px;background:#f7f7f7;border-top:1px solid #d4d4d4"></div>
<div class="a" style="left:923px;top:107px;width:2px;height:686px;background:#fafafa"></div>
<div class="a" style="left:924px;top:110px;width:371px;height:337px;border:1px solid #d0d0d0;border-right:1px solid #d8d8d8;background:#f7f7f7"></div>
<div class="a" style="left:928px;top:110px;width:1px;height:337px;background:#d4d4d4"></div>
<div class="t" style="left:941px;top:122px;font-size:18px;color:#333">Field List</div>
<svg style="left:0;top:0" width="1295" height="793"><rect x="1210.5" y="126.5" width="8" height="8" fill="none" stroke="#777" stroke-width="1.1"/><path d="M1242.5 126.5 h6 M1243.5 126.5 v4 M1247.5 126.5 v4 M1242 130.5 h7 M1245.5 130.5 v5" stroke="#777" stroke-width="1.1" fill="none"/><path d="M1274 126.5 l8.5 8.5 M1282.5 126.5 l-8.5 8.5" stroke="#777" stroke-width="1.1"/><rect x="1210.5" y="467.5" width="8" height="8" fill="none" stroke="#777" stroke-width="1.1"/><path d="M1242.5 467.5 h6 M1243.5 467.5 v4 M1247.5 467.5 v4 M1242 471.5 h7 M1245.5 471.5 v5" stroke="#777" stroke-width="1.1" fill="none"/><path d="M1274 467.5 l8.5 8.5 M1282.5 467.5 l-8.5 8.5" stroke="#777" stroke-width="1.1"/></svg>
<div class="a" style="left:929px;top:154px;width:365px;height:262px;background:#fff"></div>
<div class="a" style="left:1292px;top:154px;width:2px;height:20px;background:#e0e0e0"></div>
<div class="a" style="left:965px;top:334px;width:325px;height:20px;background:#e6e6e6"></div>
<div class="t" style="left:968px;top:159px;font-size:11px;letter-spacing:-0.1px;color:#333">ds_MIPPayStubInfo</div>
<div class="t" style="left:987px;top:179px;font-size:11px;color:#333">tblPRHistEarn</div>
<div class="t" style="left:1005px;top:199px;font-size:11px;color:#333">Amount</div>
<div class="t" style="left:1005px;top:219px;font-size:11px;color:#333">Category</div>
<div class="t" style="left:1005px;top:239px;font-size:11px;color:#333">Hours</div>
<div class="t" style="left:1005px;top:259px;font-size:11px;color:#333">Rate</div>
<div class="t" style="left:1005px;top:279px;font-size:11px;color:#333">Type</div>
<div class="t" style="left:1005px;top:299px;font-size:11px;color:#333">YTD</div>
<div class="t" style="left:987px;top:319px;font-size:11px;color:#333">tblPRHistLeave</div>
<div class="t" style="left:987px;top:339px;font-size:11px;color:#333">vw_TSEmployeeInfo</div>
<div class="t" style="left:968px;top:359px;font-size:11px;color:#333">Parameters</div>
<div class="a" style="left:929px;top:416px;width:365px;height:30px;background:#f3f3f3;border-top:1px solid #d6d6d6;border-bottom:1px solid #d0d0d0"></div>
<div class="a" style="left:1046px;top:416px;width:82px;height:28px;background:#f9f9f9;border:1px solid #d0d0d0;border-top:none"></div>
<div class="t" style="left:961.5px;top:426px;font-size:10.8px;color:#333">Report Explorer</div>
<div class="t" style="left:1076px;top:426px;font-size:11px;color:#2b5797">Field List</div>
<div class="a" style="left:923px;top:447px;width:372px;height:346px;background:#f7f7f7"></div>
<div class="a" style="left:924px;top:451px;width:371px;height:342px;border:1px solid #d0d0d0;border-bottom:none;background:#f7f7f7"></div>
<div class="a" style="left:928px;top:451px;width:1px;height:263px;background:#d4d4d4"></div>
<div class="t" style="left:941px;top:463px;font-size:18.8px;color:#333">Properties</div>
<div class="a" style="left:940px;top:504px;width:347px;height:22px;background:#fff;border:1px solid #acacac"></div>
<div class="t" style="left:944.5px;top:509px;font-size:11.8px;font-weight:bold;color:#333">GroupHeaderBand2   Group Header</div>
<div class="a" style="left:1120px;top:547px;width:167px;height:19px;background:#fff;border:1px solid #acacac"></div>
<div class="t" style="left:1124px;top:550px;font-size:11.5px;color:#777">Enter text to search...</div>
<div class="t" style="left:952px;top:599px;font-size:11px;color:#333">Background Color</div>
<div class="t" style="left:952px;top:625px;font-size:11px;color:#333">Border Color</div>
<div class="t" style="left:952px;top:651px;font-size:11px;color:#333">Border Dash Style</div>
<div class="t" style="left:952px;top:677px;font-size:11px;color:#333">Border Width</div>
<div class="t" style="left:952px;top:703px;font-size:11px;color:#333">Borders</div>
<div class="t" style="left:948px;top:730px;font-size:11px;color:#333">Font</div>
<div class="t" style="left:948px;top:781px;font-size:11px;color:#333">Foreground Color</div>
<div class="a" style="left:1091px;top:595px;width:178px;height:22px;background:#fff;border:1px solid #b4b4b4"></div>
<div class="a" style="left:1093px;top:597px;width:140px;height:18px;background-image:linear-gradient(45deg,#d4d4d4 25%,transparent 25%,transparent 75%,#d4d4d4 75%),linear-gradient(45deg,#d4d4d4 25%,transparent 25%,transparent 75%,#d4d4d4 75%);background-size:8px 8px;background-position:0 0,4px 4px"></div>
<div class="a" style="left:1091px;top:620px;width:178px;height:22px;background:#fff;border:1px solid #b4b4b4"></div>
<div class="a" style="left:1093px;top:622px;width:140px;height:18px;background:#000"></div>
<div class="a" style="left:1091px;top:646px;width:178px;height:22px;background:#fff;border:1px solid #b4b4b4"></div>
<div class="a" style="left:1210px;top:673px;width:59px;height:20px;background:#fff;border:1px solid #b4b4b4"></div>
<div class="t" style="left:1215px;top:678px;font-size:11px;color:#333">1</div>
<div class="a" style="left:1087px;top:725px;width:178px;height:21px;background:#fff;border:1px solid #b4b4b4"></div>
<div class="t" style="left:1091px;top:731px;font-size:10.8px;letter-spacing:-0.3px;color:#333">Times New Roman</div>
<div class="a" style="left:1087px;top:750px;width:60px;height:22px;background:#fff;border:1px solid #b4b4b4"></div>
<div class="t" style="left:1091px;top:755px;font-size:11px;color:#333">8</div>
<div class="a" style="left:1087px;top:777px;width:178px;height:23px;background:#fff;border:1px solid #b4b4b4"></div>
<div class="a" style="left:1089px;top:779px;width:141px;height:20px;background:#000"></div>
<svg style="left:0;top:0" width="1295" height="793"><path d="M933 161.5 l5 5 l5 -5" fill="none" stroke="#444" stroke-width="1.3"/><rect x="948.5" y="156.5" width="14" height="15" fill="#fff" stroke="#555" stroke-width="1"/><rect x="952.5" y="159.5" width="6" height="9" rx="2.5" fill="#f59a3a"/><path d="M951 181.5 l5 5 l5 -5" fill="none" stroke="#444" stroke-width="1.3"/><rect x="967" y="177" width="13" height="4" fill="#f59a3a"/><rect x="967.0" y="182.0" width="3.8" height="3.6" fill="#9a9a9a"/><rect x="971.5" y="182.0" width="3.8" height="3.6" fill="#9a9a9a"/><rect x="976.0" y="182.0" width="3.8" height="3.6" fill="#9a9a9a"/><rect x="967.0" y="186.5" width="3.8" height="3.6" fill="#9a9a9a"/><rect x="971.5" y="186.5" width="3.8" height="3.6" fill="#9a9a9a"/><rect x="976.0" y="186.5" width="3.8" height="3.6" fill="#9a9a9a"/><rect x="984.5" y="196.5" width="15" height="15" fill="#fff" stroke="#555" stroke-width="1"/><rect x="984" y="196" width="16" height="3" fill="#f59a3a"/><text x="992" y="209" text-anchor="middle" font-family="Liberation Sans" font-weight="bold" font-size="8.5" fill="#1f7ac4">1,2</text><rect x="984.5" y="216.5" width="15" height="15" fill="#fff" stroke="#555" stroke-width="1"/><rect x="984" y="216" width="16" height="3" fill="#f59a3a"/><text x="992" y="229" text-anchor="middle" font-family="Liberation Sans" font-weight="bold" font-size="9" fill="#1f7ac4">ab</text><rect x="984.5" y="236.5" width="15" height="15" fill="#fff" stroke="#555" stroke-width="1"/><rect x="984" y="236" width="16" height="3" fill="#f59a3a"/><text x="992" y="249" text-anchor="middle" font-family="Liberation Sans" font-weight="bold" font-size="8.5" fill="#1f7ac4">1,2</text><rect x="984.5" y="256.5" width="15" height="15" fill="#fff" stroke="#555" stroke-width="1"/><rect x="984" y="256" width="16" height="3" fill="#f59a3a"/><text x="992" y="269" text-anchor="middle" font-family="Liberation Sans" font-weight="bold" font-size="8.5" fill="#1f7ac4">1,2</text><rect x="984.5" y="276.5" width="15" height="15" fill="#fff" stroke="#555" stroke-width="1"/><rect x="984" y="276" width="16" height="3" fill="#f59a3a"/><text x="992" y="289" text-anchor="middle" font-family="Liberation Sans" font-weight="bold" font-size="9" fill="#1f7ac4">ab</text><rect x="984.5" y="296.5" width="15" height="15" fill="#fff" stroke="#555" stroke-width="1"/><rect x="984" y="296" width="16" height="3" fill="#f59a3a"/><text x="992" y="309" text-anchor="middle" font-family="Liberation Sans" font-weight="bold" font-size="8.5" fill="#1f7ac4">1,2</text><path d="M953 319 l5 5 l-5 5" fill="none" stroke="#444" stroke-width="1.3"/><rect x="967" y="317" width="13" height="4" fill="#f59a3a"/><rect x="967.0" y="322.0" width="3.8" height="3.6" fill="#9a9a9a"/><rect x="971.5" y="322.0" width="3.8" height="3.6" fill="#9a9a9a"/><rect x="976.0" y="322.0" width="3.8" height="3.6" fill="#9a9a9a"/><rect x="967.0" y="326.5" width="3.8" height="3.6" fill="#9a9a9a"/><rect x="971.5" y="326.5" width="3.8" height="3.6" fill="#9a9a9a"/><rect x="976.0" y="326.5" width="3.8" height="3.6" fill="#9a9a9a"/><path d="M953 339 l5 5 l-5 5" fill="none" stroke="#444" stroke-width="1.3"/><rect x="967" y="337" width="13" height="4" fill="#f59a3a"/><rect x="967.0" y="342.0" width="3.8" height="3.6" fill="#9a9a9a"/><rect x="971.5" y="342.0" width="3.8" height="3.6" fill="#9a9a9a"/><rect x="976.0" y="342.0" width="3.8" height="3.6" fill="#9a9a9a"/><rect x="967.0" y="346.5" width="3.8" height="3.6" fill="#9a9a9a"/><rect x="971.5" y="346.5" width="3.8" height="3.6" fill="#9a9a9a"/><rect x="976.0" y="346.5" width="3.8" height="3.6" fill="#9a9a9a"/><rect x="948.5" y="356.5" width="14" height="15" fill="#fff" stroke="#555" stroke-width="1"/><rect x="948" y="356" width="15" height="3" fill="#f59a3a"/><text x="955.5" y="369" text-anchor="middle" font-family="Liberation Sans" font-weight="bold" font-size="8" fill="#1f7ac4">?</text><rect x="947.5" y="423" width="5" height="4" fill="#f59a3a"/><rect x="943" y="432" width="5" height="4" fill="#f59a3a"/><rect x="952" y="432" width="5" height="4" fill="#f59a3a"/><path d="M950 427v2.5 M945.5 432v-2.5h9v2.5" fill="none" stroke="#555" stroke-width="1"/><ellipse cx="1063" cy="425" rx="4.8" ry="2.2" fill="#f59a3a"/><rect x="1058.2" y="425" width="9.6" height="8" fill="#f59a3a"/><ellipse cx="1063" cy="433" rx="4.8" ry="2" fill="#f59a3a"/><path d="M1058.2 428.2 q4.8 2.2 9.6 0 M1058.2 431.2 q4.8 2.2 9.6 0" fill="none" stroke="#f7f7f7" stroke-width="0.9"/><rect x="1064.5" y="430.5" width="7" height="3" fill="#f7f7f7" stroke="#555"/><rect x="1064.5" y="433.5" width="7" height="3" fill="#f7f7f7" stroke="#555"/><path d="M1275 514h6l-3 3z" fill="#666"/><g transform="translate(937.5 565) rotate(-41.8)"><path d="M0 0 C2 -3.2 5 -3.8 11 -3.2 L11 3.2 C6 3.2 3 2.5 0 0Z" fill="#f59a3a"/><rect x="12.5" y="-2.2" width="4.5" height="4.4" fill="#555"/><rect x="18.5" y="-3" width="8" height="6" fill="#e8403a"/></g><circle cx="979" cy="561" r="3.5" fill="#1f7ac4"/><circle cx="987" cy="552" r="3.5" fill="#1f7ac4"/><circle cx="979" cy="561" r="1.3" fill="#f7f7f7"/><circle cx="987" cy="552" r="1.3" fill="#f7f7f7"/><circle cx="983.25" cy="561.00" r="1.4" fill="#1f7ac4"/><circle cx="982.01" cy="564.01" r="1.4" fill="#1f7ac4"/><circle cx="979.00" cy="565.25" r="1.4" fill="#1f7ac4"/><circle cx="975.99" cy="564.01" r="1.4" fill="#1f7ac4"/><circle cx="974.75" cy="561.00" r="1.4" fill="#1f7ac4"/><circle cx="975.99" cy="557.99" r="1.4" fill="#1f7ac4"/><circle cx="979.00" cy="556.75" r="1.4" fill="#1f7ac4"/><circle cx="982.01" cy="557.99" r="1.4" fill="#1f7ac4"/><circle cx="991.25" cy="552.00" r="1.4" fill="#1f7ac4"/><circle cx="990.01" cy="555.01" r="1.4" fill="#1f7ac4"/><circle cx="987.00" cy="556.25" r="1.4" fill="#1f7ac4"/><circle cx="983.99" cy="555.01" r="1.4" fill="#1f7ac4"/><circle cx="982.75" cy="552.00" r="1.4" fill="#1f7ac4"/><circle cx="983.99" cy="548.99" r="1.4" fill="#1f7ac4"/><circle cx="987.00" cy="547.75" r="1.4" fill="#1f7ac4"/><circle cx="990.01" cy="548.99" r="1.4" fill="#1f7ac4"/><ellipse cx="1019" cy="550" rx="7" ry="2.6" fill="#f59a3a"/><path d="M1012 551v10 a7 2.6 0 0 0 14 0 v-10" fill="#f59a3a"/><path d="M1012 554.5 a7 2.6 0 0 0 14 0 M1012 558.5 a7 2.6 0 0 0 14 0" fill="none" stroke="#f7f7f7" stroke-width="1"/><path d="M1052 554 L1061.5 563.5" stroke="#555" stroke-width="3.8" stroke-linecap="round"/><circle cx="1050" cy="552" r="5.3" fill="#555"/><path d="M1043.5 549.5 L1047.5 545.5 L1050.5 548.5 L1048.5 552 L1046.5 552.5 Z" fill="#f7f7f7"/><path d="M1091 547 L1093.8 553.2 L1100.5 553.6 L1095.4 558 L1097 564.7 L1091 561 L1085 564.7 L1086.6 558 L1081.5 553.6 L1088.2 553.2Z" fill="#1f7ac4"/><circle cx="1281" cy="554" r="3.5" fill="none" stroke="#666" stroke-width="1"/><path d="M1278.5 556.5 l-3 3" stroke="#666" stroke-width="1.2"/><path d="M924 581.5 H941 L947 573 L953 581.5 H1294" fill="none" stroke="#cccccc" stroke-width="1"/><circle cx="1244" cy="605.5" r="5.5" fill="#6a6a6a"/><circle cx="1244.5" cy="606.0" r="3.5" fill="#5aa6e0"/><circle cx="1243" cy="604.5" r="1.2" fill="#fff"/><circle cx="1244" cy="631" r="5.5" fill="#6a6a6a"/><circle cx="1244.5" cy="631.5" r="3.5" fill="#5aa6e0"/><circle cx="1243" cy="630" r="1.2" fill="#fff"/><rect x="1095" y="656" width="60" height="2" fill="#444"/><path d="M1258 604.0h6l-3 3z" fill="#666"/><path d="M1258 629.5h6l-3 3z" fill="#666"/><path d="M1258 655.5h6l-3 3z" fill="#666"/><rect x="1093" y="682" width="12" height="1" fill="#3c63a8"/><rect x="1105" y="682" width="100" height="1" fill="#a8a8a8"/><rect x="1102" y="676.5" width="4" height="12" fill="#666"/><path d="M1258 679.5h6l-3 -3z M1258 686.5h6l-3 3z" fill="#666"/><rect x="1146" y="698" width="22" height="17" fill="#cfcfcf"/><rect x="1142" y="714" width="22" height="6" fill="#cfcfcf"/><rect x="1126.5" y="702.5" width="14" height="12" fill="none" stroke="#a0a0a0" stroke-width="0.9" stroke-dasharray="1 1.2"/><path d="M1133.5 703v11 M1127 708.5h13" stroke="#a8a8a8" stroke-width="0.9" stroke-dasharray="1 1.2"/><path d="M1123.5 714.5 H1130 M1126.5 714.5 V702.5 H1140.5 V714.5" fill="none" stroke="#555" stroke-width="1.1"/><rect x="1149.5" y="702.5" width="14" height="12" fill="none" stroke="#a0a0a0" stroke-width="0.9" stroke-dasharray="1 1.2"/><path d="M1156.5 703v11 M1150 708.5h13" stroke="#a8a8a8" stroke-width="0.9" stroke-dasharray="1 1.2"/><rect x="1178.5" y="702.5" width="14" height="12" fill="none" stroke="#a0a0a0" stroke-width="0.9" stroke-dasharray="1 1.2"/><path d="M1185.5 703v11 M1179 708.5h13" stroke="#a8a8a8" stroke-width="0.9" stroke-dasharray="1 1.2"/><path d="M1178.5 702 V715" stroke="#555" stroke-width="1.2"/><rect x="1201.5" y="702.5" width="14" height="12" fill="none" stroke="#a0a0a0" stroke-width="0.9" stroke-dasharray="1 1.2"/><path d="M1208.5 703v11 M1202 708.5h13" stroke="#a8a8a8" stroke-width="0.9" stroke-dasharray="1 1.2"/><path d="M1201 702.5 H1216" stroke="#555" stroke-width="1.2"/><rect x="1224.5" y="702.5" width="14" height="12" fill="none" stroke="#a0a0a0" stroke-width="0.9" stroke-dasharray="1 1.2"/><path d="M1231.5 703v11 M1225 708.5h13" stroke="#a8a8a8" stroke-width="0.9" stroke-dasharray="1 1.2"/><path d="M1238.5 702 V715" stroke="#555" stroke-width="1.2"/><rect x="1247.5" y="702.5" width="14" height="12" fill="none" stroke="#a0a0a0" stroke-width="0.9" stroke-dasharray="1 1.2"/><path d="M1254.5 703v11 M1248 708.5h13" stroke="#a8a8a8" stroke-width="0.9" stroke-dasharray="1 1.2"/><path d="M1247 714.5 H1262" stroke="#555" stroke-width="1.2"/><rect x="1170" y="700" width="1" height="16" fill="#c8c8c8"/><rect x="1278.5" y="602.5" width="5.5" height="5.5" fill="none" stroke="#777" stroke-width="1"/><rect x="1278.5" y="628.5" width="5.5" height="5.5" fill="none" stroke="#777" stroke-width="1"/><rect x="1278.5" y="654.5" width="5.5" height="5.5" fill="none" stroke="#777" stroke-width="1"/><rect x="1278.5" y="680.5" width="5.5" height="5.5" fill="none" stroke="#777" stroke-width="1"/><rect x="1278.5" y="706.5" width="5.5" height="5.5" fill="none" stroke="#777" stroke-width="1"/><rect x="1274.5" y="732.5" width="5.5" height="5.5" fill="none" stroke="#777" stroke-width="1"/><rect x="1274.5" y="784.5" width="5.5" height="5.5" fill="none" stroke="#777" stroke-width="1"/><path d="M1252 734.5h6l-3 3z" fill="#666"/><path d="M1135 757.5h6l-3 -3z M1135 764.5h6l-3 3z" fill="#666"/><text x="1156" y="766" font-family="Liberation Sans" font-weight="bold" font-size="14" fill="#444">B</text><text x="1183" y="766" font-family="Liberation Sans" font-style="italic" font-weight="bold" font-size="14" fill="#444">I</text><text x="1207" y="765" font-family="Liberation Sans" font-weight="bold" font-size="13" fill="#444">U</text><rect x="1206" y="767" width="12" height="1.5" fill="#444"/><text x="1234" y="766" font-family="Liberation Sans" font-weight="bold" font-size="14" fill="#444">S</text><rect x="1232" y="760" width="13" height="1.4" fill="#444"/><circle cx="1240" cy="787" r="5.5" fill="#6a6a6a"/><circle cx="1240.5" cy="787.5" r="3.5" fill="#5aa6e0"/><path d="M1254 785.5h6l-3 3z" fill="#666"/></svg>
<div class="a" style="left:260px;top:475px;width:474px;height:136px;background:#f7f7f7;border:1px solid #2f5fa3;box-shadow:0 2px 10px rgba(0,0,0,0.35)"></div>
<div class="t" style="left:269px;top:486px;font-size:11px;letter-spacing:-0.2px;color:#333">Report Designer</div>
<svg style="left:0;top:0" width="1295" height="793"><path d="M704.5 485.5 l10 10 M714.5 485.5 l-10 10" stroke="#9a9a9a" stroke-width="1.1"/><circle cx="289" cy="534" r="15" fill="#0f5fb8"/><text x="289" y="542.5" text-anchor="middle" font-family="Liberation Sans" font-size="22" fill="#fff">?</text></svg>
<div class="t" style="left:316px;top:529px;font-size:11px;letter-spacing:-0.12px;color:#333">The rpt_TSPayStub contains bindings. Do you want to convert them to expressions?</div>
<div class="t" style="left:319px;top:551px;font-size:11px;letter-spacing:0px;color:#1a7bd1;text-decoration:underline">Learn more about the expressions...</div>
<div class="a" style="left:416px;top:575px;width:75px;height:23px;background:#fff;border:2px solid #2b579a"></div>
<div class="a" style="left:418px;top:577px;width:71px;height:19px;border:1px dotted #444"></div>
<div class="t" style="left:444px;top:581px;font-size:11px;color:#333">Yes</div>
<div class="a" style="left:503px;top:575px;width:75px;height:23px;background:#fff;border:1px solid #adadad"></div>
<div class="t" style="left:533px;top:581px;font-size:11px;color:#333">No</div>
<svg style="left:0;top:0" width="1295" height="793"><defs><filter id="sh" x="-10%" y="-10%" width="130%" height="140%"><feDropShadow dx="2" dy="3.5" stdDeviation="2.8" flood-color="#000" flood-opacity="0.5"/></filter></defs><g filter="url(#sh)"><line x1="37" y1="193" x2="483.39" y2="394.49" stroke="#0fab8c" stroke-width="10" stroke-linecap="round"/><path d="M508 405.6 L475.40 407.34 L487.74 380.00 Z" fill="#0fab8c"/><line x1="991" y1="270" x2="766.20" y2="392.67" stroke="#0fab8c" stroke-width="10" stroke-linecap="round"/><path d="M742.5 405.6 L760.77 378.54 L775.14 404.88 Z" fill="#0fab8c"/><g transform="translate(59 158) rotate(143.56)"><path d="M40.40 0 Q25.05 8.82 9.86 18.54 A21 21 0 1 1 9.86 -18.54 Q25.05 -8.82 40.40 0 Z" fill="#0fab8c"/></g><g transform="translate(940.3 265) rotate(-0.43)"><path d="M40.40 0 Q25.05 8.65 9.67 18.19 A20.6 20.6 0 1 1 9.67 -18.19 Q25.05 -8.65 40.40 0 Z" fill="#0fab8c"/></g><g transform="translate(394.5 588) rotate(-0.70)"><path d="M41.20 0 Q25.55 8.61 9.62 18.10 A20.5 20.5 0 1 1 9.62 -18.10 Q25.55 -8.61 41.20 0 Z" fill="#0fab8c"/></g></g><text x="56.5" y="167.8" text-anchor="middle" font-family="Liberation Sans" font-size="21.5" fill="#fff">2</text><text x="943.5" y="272.7" text-anchor="middle" font-family="Liberation Sans" font-size="21.5" fill="#fff">3</text><path d="M395 585.3 L399.9 580.4 L401.7 580.4 L401.7 596 L399.4 596 L399.4 583.7 L396.2 586.6 Z" fill="#fff"/></svg><div class="a" style="left:0;top:153px;width:40px;height:55px;background:#fff552;mix-blend-mode:multiply"></div><div class="a" style="left:970px;top:246px;width:88px;height:32px;background:#fff552;mix-blend-mode:multiply"></div>
</body></html>
